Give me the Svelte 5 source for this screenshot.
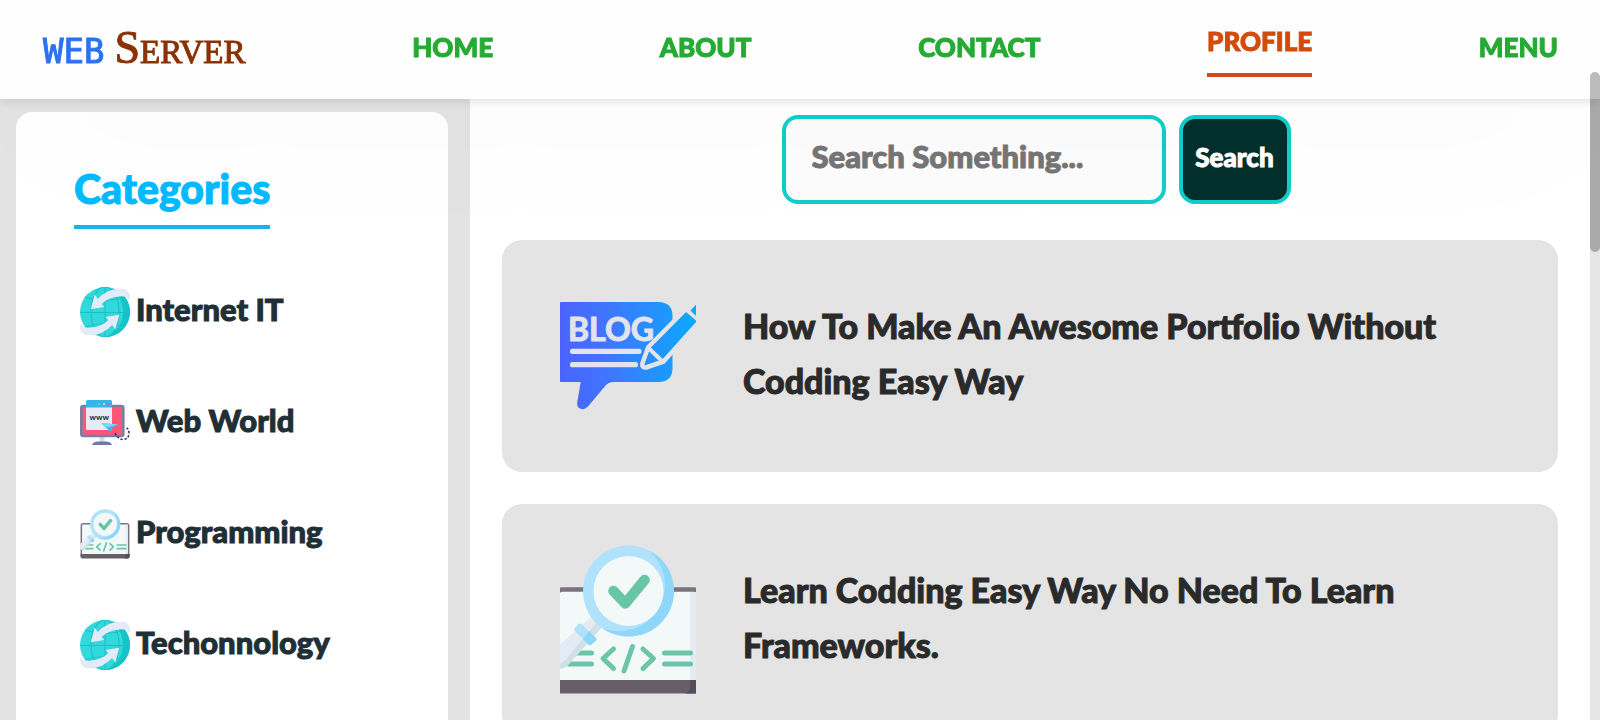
<script>
  const links = ['HOME', 'ABOUT', 'CONTACT', 'PROFILE', 'MENU'];
  const active = 'PROFILE';

  const categories = [
    { name: 'Internet IT', icon: 'globe' },
    { name: 'Web World', icon: 'monitor' },
    { name: 'Programming', icon: 'code' },
    { name: 'Techonnology', icon: 'globe' }
  ];

  const posts = [
    { title: 'How To Make An Awesome Portfolio Without Codding Easy Way', icon: 'blog' },
    { title: 'Learn Codding Easy Way No Need To Learn Frameworks.', icon: 'code' }
  ];

  let query = $state('');
</script>

{#snippet ribbon()}
  <path d="M39 7 Q47 5 49 13 Q51 4 43 2 Z" fill="#b9cde6" />
  <path d="M10.7 22.2 L14.7 7.6 L17.8 12 Q27 2 40 1.8 Q50 2 50 12 Q46 8.500 39 9.500 Q28 10.500 21.500 17 L24.500 20 Z" fill="#e3eafa" />
{/snippet}

{#snippet globe()}
  <svg viewBox="0 0 50 50" aria-hidden="true">
    <circle cx="25" cy="25" r="25" fill="#32d9dc" />
    <path d="M32 1 A25 25 0 0 1 25 50 Q44 42 43 22 Q41 8 32 1 Z" fill="#14c4c7" />
    <g fill="none" stroke="#1cc0c4" stroke-width="1.1">
      <path d="M0 25.5 H50 M25 0 V50 M5 10 Q25 17 45 10 M5 40 Q25 33 45 40" />
      <ellipse cx="25" cy="25" rx="14" ry="25" />
    </g>
    {@render ribbon()}
    <g transform="rotate(180 25 25)">{@render ribbon()}</g>
  </svg>
{/snippet}

{#snippet monitor()}
  <svg viewBox="0 0 50 50" aria-hidden="true">
    <rect x="19.5" y="38" width="5" height="6" fill="#d5dbea" />
    <path d="M12 47 Q13 43.5 18 43.5 H26 Q31 43.5 32 47 Z" fill="#6f7ba6" />
    <rect x="1.300" y="8" width="42" height="30" rx="2" fill="#ff5678" stroke="#7380a8" stroke-width="2.6" />
    <rect x="6" y="2" width="26" height="30" rx="1.5" fill="#e6eaf4" />
    <path d="M6 9.5 V3.5 Q6 2 7.5 2 H30.5 Q32 2 32 3.5 V9.5 Z" fill="#35b4ee" />
    <circle cx="19" cy="6" r="1" fill="#6ee2b0" />
    <circle cx="24" cy="6" r="1" fill="#ffe27a" />
    <circle cx="28.5" cy="6" r="1" fill="#ff5678" />
    <text x="19.2" y="22" text-anchor="middle" font-family="Lato, sans-serif" font-size="8" font-weight="900" fill="#232a4d">www</text>
    <path d="M35 35 Q38 41 43 41.5 Q49 41 49 35 Q49 30 45 29.5" fill="none" stroke="#232a4d" stroke-width="1.4" stroke-dasharray="2.4 1.6" />
    <path d="M21 25 L38 26.5 L33 29 L30.5 34 Z" fill="#38bdec" />
    <path d="M21 25 L38 26.5 L27 29.5 Z" fill="#7bd8f6" />
  </svg>
{/snippet}

{#snippet code()}
  <svg viewBox="0 0 150 150" preserveAspectRatio="xMidYMid slice" aria-hidden="true">
    <path d="M4 136 V50 Q4 44.5 10 44.5 H140 Q146 44.5 146 50 V136" fill="#f3f8f9" stroke="#7a737e" stroke-width="4.5" />
    <path d="M137 47 H144 V136 H137 Z" fill="#e5ebf5" />
    <path d="M1 135 H149 V141 Q149 148.5 142 148.5 H8 Q1 148.5 1 141 Z" fill="#665f68" />
    <path d="M137 135 H149 V141 Q149 148.5 142 148.5 H132 Q137 147 137 141 Z" fill="#544d59" />
    <g fill="none" stroke="#6bc5a6" stroke-width="5" stroke-linecap="round" stroke-linejoin="round">
      <path d="M24 108 H38.5 M16 119 H38.5 M111.5 108 H137.5 M111.5 119 H137.5" />
      <path d="M60.5 104 L50 113.5 L60.5 123.5 M79.5 101.5 L71 126 M90 104 L100.5 113.5 L90 123.5" />
    </g>
    <path d="M38 72 L49 82 L16 119 Q8 127 2 121 Q-3 114 3 103 Z" fill="#e5ebf5" />
    <path d="M44 77 L49 82 L16 119 Q8 127 2 121 Q13 117 21 104 Z" fill="#d0e0e8" />
    <path d="M25 79.5 Q27 77.5 29 79.5 L43 93 Q44 94 43 95.5 L38.5 99.5 Q37 101 35.5 99.5 L22 86 Q20.5 84.5 22 83 Z" fill="#b0e3fb" />
    <path d="M36 86 L43 93 Q44 94 43 95.5 L38.5 99.5 Q37 101 35.5 99.5 L30 94 Z" fill="#8fd7f9" />
    <circle cx="75.5" cy="46" r="45.5" fill="#b0e3fb" />
    <path d="M96 5.400 A45.5 45.5 0 1 1 49 83 A46 46 0 0 0 96 5.400 Z" fill="#8fd7f9" />
    <circle cx="75.5" cy="46" r="35" fill="#f3f8f9" />
    <path d="M60.5 46 L72.3 58.5 L91.5 35" fill="none" stroke="#68c5a5" stroke-width="10.5" stroke-linecap="round" stroke-linejoin="round" />
  </svg>
{/snippet}

{#snippet blog()}
  <svg viewBox="0 0 150 150" preserveAspectRatio="xMidYMid slice" aria-hidden="true">
    <defs>
      <linearGradient id="ink" gradientUnits="userSpaceOnUse" x1="5" y1="0" x2="145" y2="0">
        <stop offset="0" stop-color="#4c62ff" />
        <stop offset="0.35" stop-color="#4075ff" />
        <stop offset="1" stop-color="#0aabff" />
      </linearGradient>
    </defs>
    <path d="M9 21 H105 Q119.5 21 119.5 35 V87 Q119.5 101 105 101 H60 Q56 101 53 104 L35 125.5 Q31 129.5 27 127.5 Q23.5 126 24.3 121 L27.7 101 H9 Q5 101 5 97 V25 Q5 21 9 21 Z" fill="url(#ink)" />
    <text x="15" y="60" font-family="Lato, sans-serif" font-size="32" font-weight="700" fill="#e2e4ec" stroke="#e2e4ec" stroke-width="1" stroke-linejoin="round">BLOG</text>
    <path d="M19.5 70.3 H86 M19.5 83.7 H82.5" stroke="#e2e4ec" stroke-width="5.2" stroke-linecap="round" />
    <path d="M95.3 66 L133 28 L147 40 L110.5 80.5 L93 86.5 Q88.5 87 89.5 82 Z" fill="url(#ink)" stroke="#e3e4e8" stroke-width="4.5" stroke-linejoin="round" />
    <path d="M96 67.5 L110 81" stroke="#e3e4e8" stroke-width="4" />
    <path d="M137.5 29.5 L147 19.5 V39 Z" fill="url(#ink)" />
  </svg>
{/snippet}

{#snippet picture(name)}
  {#if name === 'globe'}{@render globe()}
  {:else if name === 'monitor'}{@render monitor()}
  {:else if name === 'code'}{@render code()}
  {:else}{@render blog()}{/if}
{/snippet}

<header>
  <a class="logo" href="#home"><span class="web">WEB</span><span class="server"><span class="cap">S</span>ERVER</span></a>
  {#each links as link}
    <a class="link" class:active={link === active} href={'#' + link.toLowerCase()}>{link}</a>
  {/each}
</header>

<div class="page">
  <aside>
    <nav class="panel" aria-labelledby="categories">
      <h2 id="categories">Categories</h2>
      <ul>
        {#each categories as item}
          <li><a href="#category"><span class="icon">{@render picture(item.icon)}</span><span class="name">{item.name}</span></a></li>
        {/each}
      </ul>
    </nav>
  </aside>

  <main>
    <form role="search" onsubmit={(e) => e.preventDefault()}>
      <input type="search" aria-label="Search" placeholder="Search Something..." bind:value={query} />
      <button type="submit">Search</button>
    </form>
    {#each posts as post}
      <article>
        <div class="thumb">{@render picture(post.icon)}</div>
        <h3>{post.title}</h3>
      </article>
    {/each}
  </main>
</div>

<div class="track" aria-hidden="true"></div>
<div class="thumbbar" aria-hidden="true"></div>

<style>
  :global(html) { scrollbar-width: none; }
  :global(body) { background: #fff; font-family: Lato, 'Open Sans', sans-serif; }
  * { box-sizing: border-box; }
  a { text-decoration: none; }
  .link, .name, h2, h3, input, button { -webkit-text-stroke: 1px currentColor; }

  header {
    position: sticky;
    top: 0;
    z-index: 2;
    height: 99px;
    padding: 0 42px 0 43px;
    display: flex;
    align-items: center;
    justify-content: space-between;
    background: #fefefe;
    box-shadow: 0 2px 10px rgba(50, 50, 93, 0.16), 0 50px 160px rgba(0, 0, 0, 0.02);
  }
  .logo { display: flex; align-items: baseline; gap: 10px; line-height: 56px; }
  .web { font-family: 'DejaVu Sans Mono', monospace; font-size: 34px; color: #2a72f2; -webkit-text-stroke: 1px #2a72f2; }
  .server { font-family: 'Liberation Serif', serif; font-size: 33px; color: #8b3103; -webkit-text-stroke: 1px #8b3103; }
  .cap { font-size: 46px; }
  .link { margin-bottom: 6px; font-size: 26px; font-weight: 900; line-height: 32px; color: #25aa34; }
  .active { margin-top: 8px; padding-bottom: 16px; border-bottom: 4px solid #c94f17; color: #d44b08; }

  .page { display: grid; grid-template-columns: 470px 1fr; padding-right: 10px; }
  aside { background: #e3e3e3; padding: 13px 22px 16px 16px; }
  .panel { height: 100%; padding: 48px 58px; background: #fff; border-radius: 16px; }
  h2 {
    width: fit-content;
    margin: 0 0 58px;
    padding-bottom: 8px;
    border-bottom: 4px solid #19b2ea;
    font-size: 41px;
    font-weight: 900;
    line-height: 57px;
    color: #02baff;
  }
  ul { list-style: none; margin: 0; padding: 0 0 0 6px; display: grid; gap: 61px; }
  li a { display: flex; gap: 6px; color: #1f2f36; }
  .icon { width: 50px; height: 50px; }
  .name { font-size: 31px; font-weight: 900; line-height: 44px; }
  svg { display: block; width: 100%; height: 100%; }

  main { padding: 16px 32px 32px; display: flex; flex-direction: column; gap: 32px; }
  form { display: flex; justify-content: center; gap: 13px; margin: 0 0 4px 12px; }
  input {
    width: 384px;
    height: 89px;
    padding: 0 26px 8px;
    border: 4px solid #0fcfc8;
    border-radius: 16px;
    outline: none;
    background: #fcfcfc;
    font: 900 31px Lato, sans-serif;
    color: #222;
    appearance: none;
  }
  input::placeholder { color: #757575; opacity: 1; }
  button {
    width: 112px;
    padding: 0 0 6px;
    border: 4px solid #0fcfc8;
    border-radius: 16px;
    background: #032f2d;
    font: 900 26px Lato, sans-serif;
    color: #fff;
  }
  article {
    min-height: 232px;
    padding: 40px 56px 40px 58px;
    display: flex;
    align-items: center;
    gap: 47px;
    border-radius: 20px;
    background: #e4e4e4;
  }
  .thumb { flex: none; width: 136px; height: 150px; overflow: hidden; }
  h3 { margin: 0; padding-bottom: 6px; font-size: 34px; font-weight: 900; line-height: 55px; color: #2a2a2a; }

  .track { position: fixed; top: 99px; right: 0; bottom: 0; width: 10px; background: #e6e6e6; }
  .thumbbar { position: fixed; z-index: 3; top: 72px; right: 0; width: 10px; height: 180px; border-radius: 8px; background: rgba(0, 0, 0, 0.26); }
</style>
